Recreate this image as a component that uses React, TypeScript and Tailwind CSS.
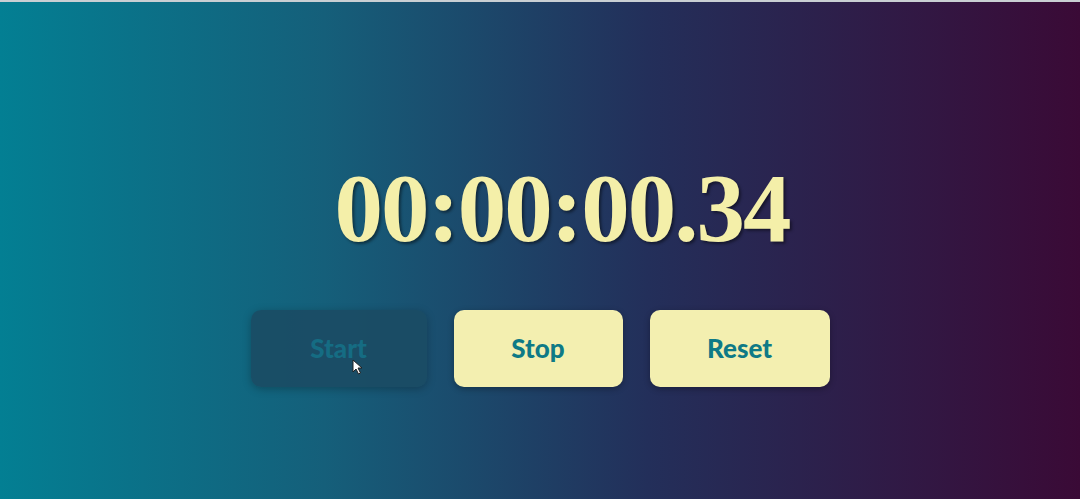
export default function App() {
  return (
    <div className="relative flex h-[499px] w-full flex-col items-center justify-center border-t-2 border-[#c9cfd3] bg-[linear-gradient(90deg,#037f93_0%,#155f7a_30%,#232f5a_60%,#3a0a36_100%)] pt-[46px]">
      <div
        className="pl-11 font-['Liberation_Serif',serif] text-[97px] font-bold leading-none tracking-[-2px] text-[#f4efa9] [text-shadow:2px_2px_3px_rgba(0,0,0,0.45)]"
      >
        00:00:00.34
      </div>

      <div className="mt-[53px] flex gap-[27px] font-['Lato',sans-serif] text-[26px] font-black">
        <button
          type="button"
          className="h-[77px] w-[176px] rounded-[10px] bg-[#1b4b64]/90 text-[#156c83] shadow-[0_2px_8px_rgba(0,0,0,0.25)]"
        >
          Start
        </button>
        <button
          type="button"
          className="h-[77px] w-[169px] rounded-[10px] bg-[#f3efb0] text-[#0e7a86] shadow-[0_2px_6px_rgba(0,0,0,0.3)]"
        >
          Stop
        </button>
        <button
          type="button"
          className="h-[77px] w-[180px] rounded-[10px] bg-[#f3efb0] text-[#0e7a86] shadow-[0_2px_6px_rgba(0,0,0,0.3)]"
        >
          Reset
        </button>
      </div>

      <svg className="absolute left-[352px] top-[357px]" width="11" height="16" viewBox="0 0 11 16">
        <path d="M1 1 L1 13 L4 10 L6.5 15 L8.5 14 L6 9 L10 9 Z" fill="#fff" stroke="#222" strokeWidth="1" />
      </svg>
    </div>
  )
}
